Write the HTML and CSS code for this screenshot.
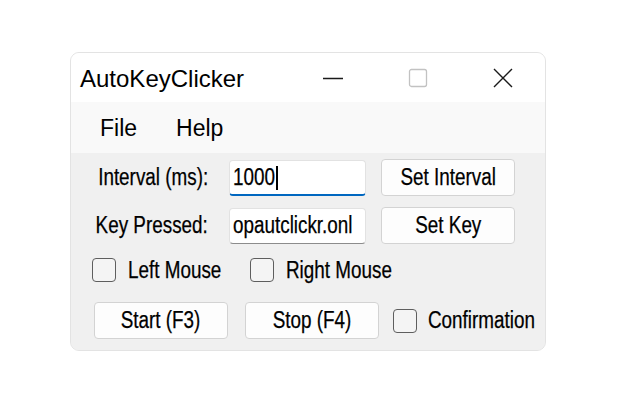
FILE: index.html
```html
<!DOCTYPE html>
<html>
<head>
<meta charset="utf-8">
<link rel="stylesheet" href="styles.css">
</head>
<body>
<div class="stage">
  <div class="window">
    <div class="titlebar">
      <span class="title">AutoKeyClicker</span>
      <div class="controls">
        <span class="ctl"><svg width="22" height="22" viewBox="0 0 22 22"><line x1="1" y1="11.5" x2="21" y2="11.5" stroke="#1a1a1a" stroke-width="1.3"/></svg></span>
        <span class="ctl"><svg width="22" height="22" viewBox="0 0 22 22"><rect x="2.5" y="2.5" width="17" height="17" rx="2" fill="none" stroke="#c2c2c2" stroke-width="1.3"/></svg></span>
        <span class="ctl"><svg width="22" height="22" viewBox="0 0 22 22"><path d="M2 2 L20 20 M20 2 L2 20" stroke="#1a1a1a" stroke-width="1.4" fill="none"/></svg></span>
      </div>
    </div>
    <div class="menubar">
      <span class="menu">File</span>
      <span class="menu">Help</span>
    </div>
    <div class="content">
      <div class="row r1">
        <span class="lbl"><span class="t tr">Interval (ms):</span></span>
        <div class="textbox active"><span class="t tl">1000</span><span class="caret"></span></div>
        <button class="btn"><span class="t">Set Interval</span></button>
      </div>
      <div class="row r2">
        <span class="lbl"><span class="t tr">Key Pressed:</span></span>
        <div class="textbox"><span class="t tl">opautclickr.onl</span></div>
        <button class="btn"><span class="t">Set Key</span></button>
      </div>
      <div class="row r3">
        <span class="check"></span><span class="clbl"><span class="t tl">Left Mouse</span></span>
        <span class="check second"></span><span class="clbl"><span class="t tl">Right Mouse</span></span>
      </div>
      <div class="row r4">
        <button class="btn start"><span class="t">Start (F3)</span></button>
        <button class="btn stop"><span class="t">Stop (F4)</span></button>
        <span class="check third"></span><span class="clbl"><span class="t tl">Confirmation</span></span>
      </div>
    </div>
  </div>
</div>
</body>
</html>
```
FILE: styles.css
```css
* { box-sizing: border-box; }
html, body { margin: 0; padding: 0; background: #ffffff; }
body { width: 617px; height: 405px; overflow: hidden; }
.stage { padding: 52px 0 0 70px; }
.window {
  width: 476px;
  height: 299px;
  border: 1px solid #e3e3e3;
  border-radius: 9px;
  overflow: hidden;
  background: #f0f0f0;
  display: flex;
  flex-direction: column;
}
.titlebar {
  height: 49px;
  background: #ffffff;
  display: flex;
  align-items: center;
}
.title {
  font-family: "Liberation Sans", Arial, sans-serif;
  font-size: 24px;
  color: #000;
  padding-left: 9px;
  padding-top: 2px;
}
.controls { margin-left: auto; display: flex; }
.ctl {
  width: 85px;
  height: 49px;
  display: flex;
  align-items: center;
  justify-content: center;
}
.menubar {
  height: 51px;
  background: #f9f9f9;
  display: flex;
  align-items: center;
  padding-left: 29px;
  font-family: "Liberation Sans", Arial, sans-serif;
  font-size: 23px;
  color: #000;
}
.menu { margin-right: 39px; padding-top: 2px; }
.content {
  flex: 1;
  background: #f0f0f0;
  padding-top: 6px;
  font-family: "Liberation Sans", Arial, sans-serif;
  font-size: 23px;
  color: #000;
}
.t {
  display: inline-block;
  transform: scaleX(0.82);
  white-space: nowrap;
  -webkit-text-stroke: 0.25px #000;
}
.t.tr { transform-origin: right center; }
.t.tl { transform-origin: left center; }
.row { display: flex; align-items: center; }
.r1 { height: 37px; }
.r2 { height: 37px; margin-top: 11px; }
.r3 { height: 24px; margin-top: 14px; padding-left: 21px; }
.r4 { height: 37px; margin-top: 20px; padding-left: 23px; }
.lbl { width: 137px; flex: none; text-align: right; }
.textbox {
  width: 137px;
  height: 36px;
  flex: none;
  margin-left: 21px;
  background: #ffffff;
  border: 1px solid #e2e2e2;
  border-bottom: 1px solid #8c8c8c;
  border-radius: 4px;
  padding: 0 0 0 3px;
  display: flex;
  align-items: center;
  white-space: nowrap;
  overflow: hidden;
}
.textbox .t { flex: none; }
.textbox.active { border-bottom: 2px solid #0067c0; padding-top: 1px; }
.caret {
  display: inline-block;
  flex: none;
  width: 1.5px;
  height: 24px;
  background: #000;
  margin-left: -8px;
}
.btn {
  font: inherit;
  color: #000;
  width: 134px;
  height: 37px;
  flex: none;
  margin: 0;
  padding: 0;
  background: #fdfdfd;
  border: 1px solid #d3d3d3;
  border-radius: 4px;
}
.r1 .btn, .r2 .btn { margin-left: 15px; }
.stop { margin-left: 17px; }
.check {
  width: 24px;
  height: 24px;
  border: 1.5px solid #5e5e5e;
  border-radius: 4px;
  background: #f4f4f4;
  flex: none;
}
.check.second { margin-left: 26px; }
.check.third { margin-left: 14px; }
.clbl { margin-left: 12px; flex: none; }
.r3 .clbl:nth-of-type(2) { width: 96px; }
.r4 .clbl { margin-left: 11px; }
```
